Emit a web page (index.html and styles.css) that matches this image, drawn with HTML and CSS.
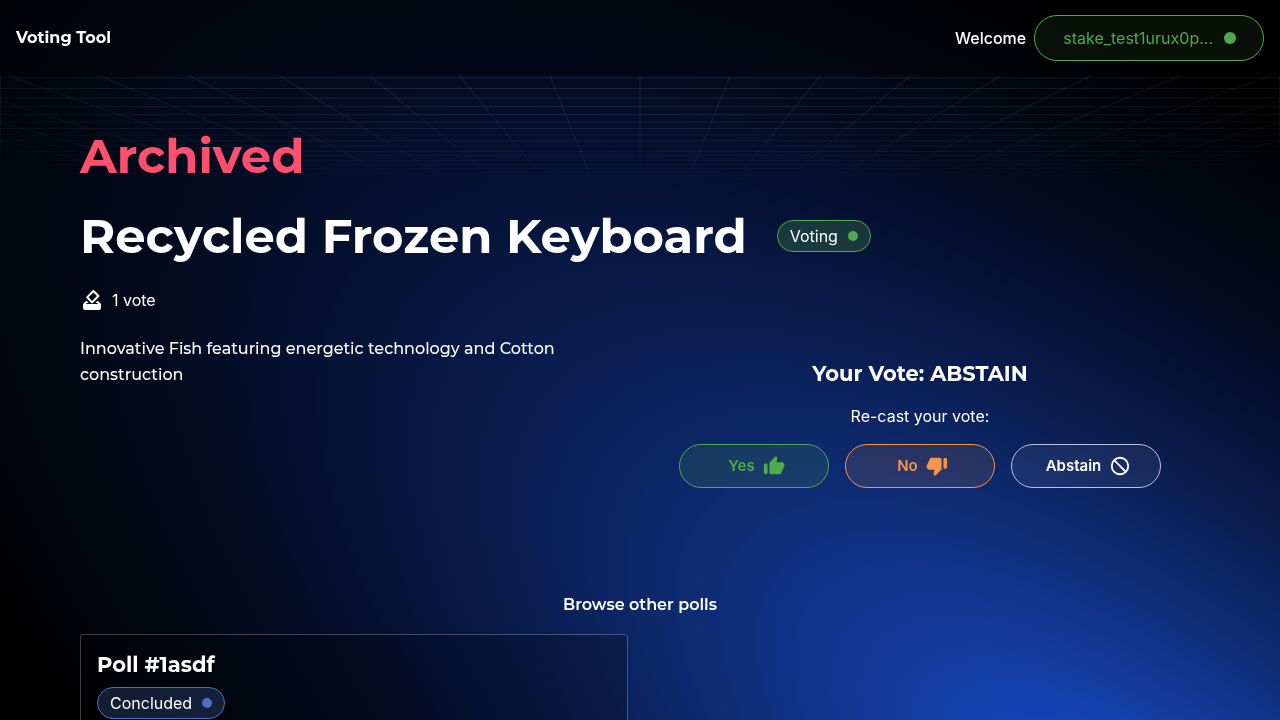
FILE: index.html
```html
<!DOCTYPE html>
<html lang="en">
<head>
<meta charset="utf-8">
<meta name="viewport" content="width=device-width, initial-scale=1">
<title>Voting Tool</title>
<link rel="stylesheet" href="styles.css">
</head>
<body>
<div class="backdrop"></div>
<header class="header">
  <a class="brand" href="#">Voting Tool</a>
  <div class="account">
    <span class="welcome">Welcome</span>
    <button class="wallet" type="button">stake_test1urux0p...<span class="dot dot-lg"></span></button>
  </div>
</header>
<main class="main">
  <svg class="grid" viewBox="0 0 1280 124" preserveAspectRatio="none" aria-hidden="true">
    <path d="M640 0V124M549.600 0L599.600 124M459.200 0L559.300 124M368.800 0L518.900 124M278.400 0L478.600 124M188 0L438.200 124M97.600 0L397.900 124M7.200 0L357.500 124M-83.200 0L317.200 124M-173.600 0L276.800 124M-264 0L236.400 124M-354.400 0L196 124M730.400 0L680.400 124M820.800 0L720.700 124M911.200 0L761.100 124M1001.600 0L801.400 124M1092 0L841.800 124M1182.400 0L882.100 124M1272.800 0L922.500 124M1363.200 0L962.800 124M1453.600 0L1003.200 124M1544 0L1043.600 124M1634.400 0L1084 124M.5 0V124M1279.500 0V124"/>
    <path d="M0 3H1280M0 13.500H1280M0 23H1280M0 31.700H1280M0 39.700H1280M0 47H1280M0 53.500H1280M0 60H1280M0 65.700H1280M0 71H1280M0 76.500H1280M0 80.700H1280M0 85.300H1280M0 89.400H1280M0 93.600H1280M0 97.300H1280M0 100.700H1280M0 104H1280M0 107H1280"/>
  </svg>
  <div class="content">
    <h1 class="title archived">Archived</h1>
    <div class="title-row">
      <h1 class="title">Recycled Frozen Keyboard</h1>
      <span class="chip chip-green">Voting<span class="dot"></span></span>
    </div>
    <div class="votes">
      <svg width="24" height="24" viewBox="0 0 24 24" fill="currentColor" aria-hidden="true"><path d="M18 13h-.68l-2 2h1.910L19 17H5l1.780-2h2.050l-2-2H6l-3 3v4c0 1.100.89 2 1.990 2H19c1.100 0 2-.89 2-2v-4l-3-3zm-1-5.050l-4.950 4.950-3.540-3.540 4.950-4.950L17 7.950zm-4.240-5.660L6.390 8.660c-.39.39-.39 1.020 0 1.410l4.950 4.950c.39.39 1.020.39 1.410 0l6.360-6.360c.39-.39.39-1.020 0-1.410L14.160 2.300c-.38-.4-1.010-.4-1.400-.01z"/><path d="M4 16h16v4H4z"/></svg>
      <span>1 vote</span>
    </div>
    <div class="columns">
      <p class="description">Innovative Fish featuring energetic technology and Cotton construction</p>
      <section class="ballot">
        <h2 class="subtitle">Your Vote: ABSTAIN</h2>
        <p class="recast">Re-cast your vote:</p>
        <div class="actions">
          <button class="vote yes" type="button">Yes<svg width="22" height="22" viewBox="0 0 24 24" fill="currentColor" aria-hidden="true"><path d="M13.120 2.060 7.580 7.600c-.37.37-.58.88-.58 1.410V19c0 1.100.9 2 2 2h9c.8 0 1.520-.48 1.840-1.210l3.260-7.610C23.940 10.200 22.490 8 20.340 8h-5.650l.95-4.580c.1-.5-.05-1.010-.41-1.370-.59-.58-1.530-.58-2.110.01zM3 21c1.100 0 2-.9 2-2v-8c0-1.100-.9-2-2-2s-2 .9-2 2v8c0 1.100.9 2 2 2z"/></svg></button>
          <button class="vote no" type="button">No<svg width="22" height="22" viewBox="0 0 24 24" fill="currentColor" aria-hidden="true"><path d="m10.880 21.940 5.530-5.540c.37-.37.58-.88.58-1.410V5c0-1.100-.9-2-2-2H6c-.8 0-1.520.48-1.830 1.210L.91 11.820C.06 13.800 1.510 16 3.660 16h5.650l-.95 4.580c-.1.5.05 1.010.41 1.370.59.58 1.530.58 2.110-.01zM21 3c-1.100 0-2 .9-2 2v8c0 1.100.9 2 2 2s2-.9 2-2V5c0-1.100-.9-2-2-2z"/></svg></button>
          <button class="vote abstain" type="button">Abstain<svg width="22" height="22" viewBox="0 0 24 24" fill="none" stroke="currentColor" stroke-width="2" aria-hidden="true"><circle cx="12" cy="12" r="9"/><path d="M5.600 5.600l12.800 12.800"/></svg></button>
        </div>
      </section>
    </div>
    <h3 class="browse">Browse other polls</h3>
    <div class="polls">
      <a class="poll" href="#">
        <h2 class="subtitle">Poll #1asdf</h2>
        <span class="chip chip-blue">Concluded<span class="dot"></span></span>
      </a>
    </div>
  </div>
</main>
</body>
</html>
```
FILE: styles.css
```css
* { box-sizing: border-box; }

html { scrollbar-width: none; }

body {
  margin: 0;
  background: #000;
  color: #fff;
  font: 400 16px/24px Inter, sans-serif;
}

h1, h2, h3, p { margin: 0; }
a { color: inherit; text-decoration: none; }
button { font: inherit; cursor: pointer; }

/* Tilted blue glow behind the whole page */
.backdrop {
  position: fixed;
  inset: 0;
  z-index: -1;
  overflow: hidden;
}
.backdrop::before {
  content: "";
  position: absolute;
  left: 90%;
  top: 119%;
  width: 250vw;
  height: 108vw;
  transform: translate(-50%, -50%) rotate(37deg);
  background: radial-gradient(closest-side, #1746bd 0%, #1544b4 12%, #0f2e7a 31%, #0a1e52 47%, #051030 63%, #020713 81%, #000 98%);
}

.header {
  display: flex;
  align-items: center;
  justify-content: space-between;
  padding: 15px 16px 14px;
  background: rgba(0, 0, 0, 0.3);
}

.brand, .title, .subtitle, .browse, .description {
  font-family: Montserrat, Inter, sans-serif;
}

.brand { font-weight: 700; }
.account { display: flex; align-items: center; gap: 8px; }
.welcome { font-weight: 500; }

.wallet {
  display: flex;
  align-items: center;
  gap: 11px;
  height: 46px;
  padding: 0 27px 0 28px;
  border: 1px solid #4fa94d;
  border-radius: 23px;
  background: rgba(79, 169, 77, 0.1);
  color: #4fa94d;
}

.dot {
  width: 10px;
  height: 10px;
  border-radius: 50%;
  background: currentColor;
}
.dot-lg { width: 12px; height: 12px; }

.main { position: relative; }

.grid {
  position: absolute;
  top: 0;
  left: 0;
  width: 100%;
  height: 124px;
  fill: none;
  stroke: rgba(255, 255, 255, 0.09);
  stroke-width: 1;
  -webkit-mask-image: radial-gradient(ellipse 90% 95% at 50% 0, #000 30%, transparent 100%);
  mask-image: radial-gradient(ellipse 90% 95% at 50% 0, #000 30%, transparent 100%);
}

.content {
  position: relative;
  padding: 53px 80px 24px;
}

.title {
  font-size: 48px;
  line-height: 56px;
  font-weight: 700;
}
.archived { color: #ff4f6e; }

.title-row {
  display: flex;
  align-items: center;
  gap: 30px;
  margin-top: 24px;
}

.chip {
  display: inline-flex;
  align-items: center;
  gap: 10px;
  height: 32px;
  padding: 0 12px;
  border: 1px solid #4fa94d;
  border-radius: 16px;
  background: rgba(79, 169, 77, 0.25);
}
.chip-green .dot { background: #4fa94d; }
.chip-blue { border-color: #4c6fbf; background: rgba(76, 111, 191, 0.25); }
.chip-blue .dot { background: #4c6fbf; }

.votes {
  display: flex;
  align-items: center;
  gap: 8px;
  margin-top: 24px;
}

.columns {
  display: grid;
  grid-template-columns: 1fr 1fr;
  margin-top: 24px;
}

.description {
  max-width: 528px;
  line-height: 26px;
  font-weight: 500;
}

.ballot {
  display: flex;
  flex-direction: column;
  align-items: center;
  padding-top: 24px;
}

.subtitle { font-size: 21px; line-height: 28px; font-weight: 700; }
.recast { margin-top: 16px; }
.actions { display: flex; gap: 16px; margin-top: 16px; }

.vote {
  display: flex;
  align-items: center;
  justify-content: center;
  gap: 8px;
  width: 150px;
  height: 44px;
  padding: 0 0 0 5px;
  border: 1px solid currentColor;
  border-radius: 22px;
  font-size: 15px;
  font-weight: 600;
}
.yes { color: #4fa94d; background: rgba(79, 169, 77, 0.15); }
.no { color: #f79447; background: rgba(247, 148, 71, 0.12); }
.abstain { color: #fff; border-color: #bcc4da; background: rgba(255, 255, 255, 0.06); }

.browse {
  margin-top: 105px;
  text-align: center;
  font-size: 16px;
  line-height: 24px;
  font-weight: 600;
}

.polls {
  display: grid;
  grid-template-columns: 1fr 1fr;
  gap: 24px;
  margin-top: 17px;
}

.poll {
  display: block;
  padding: 16px;
  border: 1px solid rgba(255, 255, 255, 0.25);
  border-radius: 4px;
  background: rgba(0, 0, 0, 0.2);
}
.poll .chip { margin-top: 8px; }
```
